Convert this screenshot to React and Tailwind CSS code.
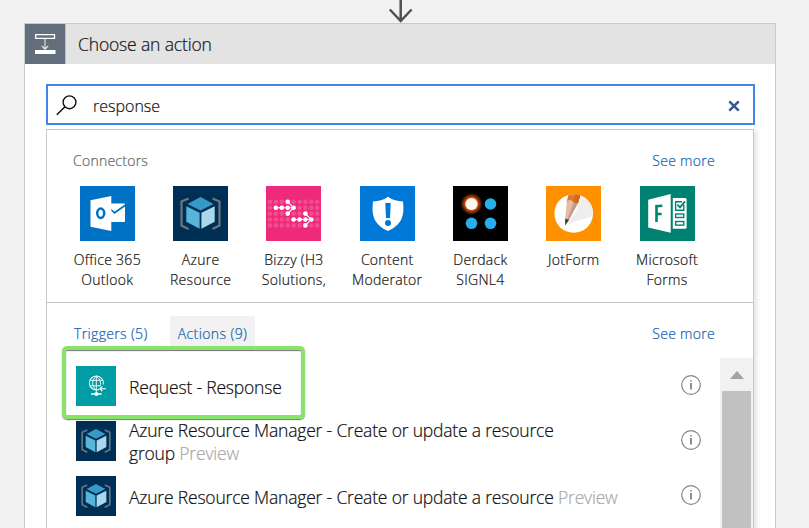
import React from "react";

function AzureIcon({ className }) {
  return (
    <svg viewBox="0 0 55 55" className={className}>
      <rect width="55" height="55" fill="#002f55" />
      <path d="M15.5 12.5 L8.5 15.5 V39.5 L15.5 43" fill="none" stroke="#6d7780" strokeWidth="2.2" />
      <path d="M39.5 12.5 L46.5 15.5 V39.5 L39.5 43" fill="none" stroke="#6d7780" strokeWidth="2.2" />
      <path d="M27.5 11 L40.5 18 L27.5 24.5 L14.5 18 Z" fill="#3999c6" />
      <path d="M13.3 20.3 L26.6 26.8 V42.8 L13.3 35.8 Z" fill="#59b4d9" />
      <path d="M41.7 20.3 L28.4 26.8 V42.8 L41.7 35.8 Z" fill="#a9d8ec" />
    </svg>
  );
}

function OutlookIcon() {
  return (
    <svg viewBox="0 0 55 55" className="size-[55px]">
      <rect width="55" height="55" fill="#0072c6" />
      <rect x="29" y="17.5" width="16" height="18.5" rx="0.8" fill="#fff" />
      <path d="M31 23.5 L34.5 26.8 L46 18.8" fill="none" stroke="#0072c6" strokeWidth="1.7" />
      <path d="M10.5 14.3 L31.3 10 V45 L10.5 40.8 Z" fill="#fff" />
      <ellipse cx="20.7" cy="27.3" rx="3.5" ry="4.7" fill="none" stroke="#0072c6" strokeWidth="2.5" />
    </svg>
  );
}

const gridDots = [];
for (let r = 0; r < 5; r++) {
  for (let c = 0; c < 9; c++) gridDots.push([4 + c * 5.9, 15.8 + r * 5.9]);
}
const brightDots = [
  [9.9, 21.7], [15.8, 21.7], [21.7, 21.7], [27.6, 21.7], [21.7, 15.8], [21.7, 27.6],
  [27.6, 33.5], [33.5, 33.5], [39.4, 33.5], [45.3, 33.5], [39.4, 27.6], [39.4, 39.4],
];

function BizzyIcon() {
  return (
    <svg viewBox="0 0 55 55" className="size-[55px]">
      <rect width="55" height="55" fill="#ee2a7b" />
      {gridDots.map(([x, y]) => (
        <circle key={x + "-" + y} cx={x} cy={y} r="2.3" fill="#fff" opacity="0.17" />
      ))}
      <path
        d="M9.9 21.7 H27.6 M21.7 15.8 L27.6 21.7 L21.7 27.6 M27.6 33.5 H45.3 M39.4 27.6 L45.3 33.5 L39.4 39.4"
        fill="none" stroke="#fff" strokeWidth="1.1"
      />
      {brightDots.map(([x, y]) => (
        <circle key={x + "-" + y} cx={x} cy={y} r="2.3" fill="#fff" />
      ))}
    </svg>
  );
}

function ModeratorIcon() {
  return (
    <svg viewBox="0 0 55 55" className="size-[55px]">
      <rect width="55" height="55" fill="#0078d7" />
      <path d="M28 10.8 C32.5 14.3 37.5 15.3 43 15.5 C44.6 29 42.5 38.5 28 45 C13.5 38.5 11.4 29 13 15.5 C18.5 15.3 23.5 14.3 28 10.8 Z" fill="#fff" />
      <path d="M25.3 17 H30.7 L30 32 H26 Z" fill="#0078d7" />
      <circle cx="28" cy="37" r="3" fill="#0078d7" />
    </svg>
  );
}

function SignlIcon() {
  return (
    <svg viewBox="0 0 55 55" className="size-[55px]">
      <defs>
        <radialGradient id="signlGlow">
          <stop offset="0.5" stopColor="#f06a10" />
          <stop offset="0.68" stopColor="#a03a08" />
          <stop offset="1" stopColor="#000" />
        </radialGradient>
      </defs>
      <rect width="55" height="55" fill="#000" />
      <circle cx="18.5" cy="18" r="11" fill="url(#signlGlow)" />
      <circle cx="18.5" cy="18" r="6.1" fill="#fff7f0" />
      <circle cx="37.5" cy="18" r="5.8" fill="#28aeea" />
      <circle cx="18.5" cy="37.3" r="5.8" fill="#28aeea" />
      <circle cx="37.5" cy="37.3" r="5.8" fill="#28aeea" />
    </svg>
  );
}

function JotFormIcon() {
  return (
    <svg viewBox="0 0 55 55" className="size-[55px]">
      <defs>
        <clipPath id="jotDisc"><circle cx="27.7" cy="27.5" r="19.3" /></clipPath>
      </defs>
      <rect width="55" height="55" fill="#ff9100" />
      <circle cx="27.7" cy="27.5" r="19.3" fill="#fff" />
      <g clipPath="url(#jotDisc)">
        <path d="M36 8 L47 20 V30 L20.5 38.5 L30 26 Z" fill="#eeeeef" />
        <path d="M23 7 L34.8 8 L31.8 18 L20.8 15 Z" fill="#e87722" />
        <path d="M29.5 8 L34.8 8 L31.8 18 L27.5 16.5 Z" fill="#d0681f" />
        <path d="M20.8 15 L24.5 13.8 L27.5 16.5 L31.8 17.5 L22.6 34.5 L19.2 33 Z" fill="#e3bda6" />
        <path d="M27.5 16.5 L31.8 17.5 L22.6 34.5 L21.4 33.7 Z" fill="#c69a83" />
        <path d="M19.3 32.4 L23 34 L19 39.5 Z" fill="#35383d" />
      </g>
    </svg>
  );
}

function FormsIcon() {
  return (
    <svg viewBox="0 0 55 55" className="size-[55px]">
      <rect width="55" height="55" fill="#008272" />
      <path d="M32.8 12 H45 Q46.6 12 46.6 13.6 V41.2 Q46.6 42.8 45 42.8 H32.8 Z" fill="#fff" />
      <path d="M8.2 13.8 L30.7 8 V46.8 L8.2 41.5 Z" fill="#fff" />
      <path d="M16.5 36 V20.2 L22.3 19.8 M16.5 28 H21.6" fill="none" stroke="#008272" strokeWidth="2.6" />
      <g fill="none" stroke="#008272" strokeWidth="1.4">
        <path d="M43.8 18.5 V24.3 H35.6 V15.8 H42" />
        <path d="M37.4 18.7 L40 21.3 L45 15.3" strokeWidth="1.8" />
        <rect x="35.6" y="28" width="8.2" height="3.5" />
        <rect x="35.6" y="35.5" width="8.2" height="3.6" />
      </g>
    </svg>
  );
}

function RequestIcon() {
  return (
    <svg viewBox="0 0 40 40" className="size-10">
      <rect width="40" height="40" fill="#009da5" />
      <g fill="none" stroke="#fff" strokeWidth="1.1">
        <path d="M23.5 23.2 A7 7 0 1 1 27.2 18.5" />
        <path d="M20.3 10.2 C15.5 13.5 15.5 20.5 20.3 24.2 M20.3 10.2 C25 13.5 25 18 24 20.5 M20.3 10.2 V28 M14.5 14.3 H26 M13.5 19.8 H24" strokeWidth="0.9" />
        <path d="M24 22.7 H30 M26.3 20.4 L24 22.7 L26.3 25" />
        <path d="M15 28 H25.6" strokeWidth="1.5" />
      </g>
      <circle cx="20.3" cy="28" r="1.9" fill="#fff" />
    </svg>
  );
}

function InfoIcon() {
  return (
    <svg viewBox="0 0 20 20" className="size-5">
      <circle cx="10" cy="10" r="9.3" fill="none" stroke="#868686" strokeWidth="1.2" />
      <path d="M10 8 V14.6" stroke="#808080" strokeWidth="1.8" />
      <path d="M10 5.2 V6.6" stroke="#808080" strokeWidth="1.8" />
    </svg>
  );
}

const connectors = [
  { icon: <OutlookIcon />, lines: ["Office 365", "Outlook"] },
  { icon: <AzureIcon className="size-[55px]" />, lines: ["Azure", "Resource"] },
  { icon: <BizzyIcon />, lines: ["Bizzy (H3", "Solutions,"] },
  { icon: <ModeratorIcon />, lines: ["Content", "Moderator"] },
  { icon: <SignlIcon />, lines: ["Derdack", "SIGNL4"] },
  { icon: <JotFormIcon />, lines: ["JotForm"] },
  { icon: <FormsIcon />, lines: ["Microsoft", "Forms"] },
];

function ActionRow({ icon, children }) {
  return (
    <div className="flex h-[55px] shrink-0 items-start pl-[29px]">
      <div className="mt-2 shrink-0">{icon}</div>
      <div className="mt-[6px] ml-[13px] flex h-[46px] flex-1 items-center text-[17.5px] leading-[23px] tracking-[-0.19px] whitespace-nowrap text-[#111]">
        <div>{children}</div>
      </div>
      <div className="mt-[17px] mr-[19px] shrink-0"><InfoIcon /></div>
    </div>
  );
}

export default function App() {
  return (
    <div className="relative h-[528px] w-[809px] overflow-hidden bg-[#f1f1f1] pt-[23px] pl-[24px] font-['Open_Sans','Noto_Sans',sans-serif] font-light [-webkit-text-stroke:0.22px]">
      <svg viewBox="0 0 28 24" className="absolute top-0 left-[387px] h-6 w-7">
        <path d="M13.7 0 V21 M2.8 9.5 L13.7 21 L24.6 9.5" fill="none" stroke="#505050" strokeWidth="2.5" />
      </svg>

      <div className="flex h-[520px] w-[752px] flex-col border border-[#cacaca] bg-white">
        <header className="flex h-10 shrink-0 items-center bg-[#e3e3e3]">
          <div className="h-10 w-[41px] border-r border-[#bfc3c7] bg-[#626e7c]">
            <svg viewBox="0 0 40 40" className="size-10">
              <path d="M10.7 10.7 H29.5 V14.4 H10.7 Z" fill="none" stroke="#fff" strokeWidth="1.3" />
              <path d="M20 15 V25 M16.8 22 L20 25.2 L23.2 22" fill="none" stroke="#e6e9ec" strokeWidth="1.1" />
              <rect x="10" y="26" width="20.5" height="4" fill="#fff" />
            </svg>
          </div>
          <h1 className="ml-3 pt-px text-[17.5px] tracking-[-0.15px] whitespace-nowrap text-[#161616]">Choose an action</h1>
        </header>

        <div className="mt-5 ml-[21px] flex h-[41px] w-[709px] shrink-0 items-center border-2 border-[#4285e8] bg-white">
          <svg viewBox="0 0 22 22" className="ml-2 size-[22px]">
            <circle cx="13.5" cy="8.3" r="6.4" fill="none" stroke="#111" strokeWidth="1.4" />
            <path d="M9 12.8 L0.8 20.8" stroke="#111" strokeWidth="1.5" />
          </svg>
          <span className="ml-[15px] pt-[2px] text-[16px] tracking-[0px] text-[#161616]">response</span>
          <svg viewBox="0 0 12 12" className="mt-[2px] mr-[13px] ml-auto size-3">
            <path d="M1.3 1.3 L10.7 10.7 M10.7 1.3 L1.3 10.7" stroke="#35589b" strokeWidth="2.6" />
          </svg>
        </div>

        <div className="mt-1 ml-[21px] flex h-[420px] w-[708px] shrink-0 flex-col border border-[#c8c8c8] bg-white shadow-[3px_2px_4px_rgba(0,0,0,0.1)]">
          <section className="h-[173px] shrink-0 border-b border-[#c4c4c4]">
            <div className="flex h-[56px] items-center justify-between pt-[5px] pr-[38px] pl-[26px] text-[14px]">
              <span className="tracking-[0.25px] text-[#666]">Connectors</span>
              <a className="tracking-[0.3px] text-[#1463b5]">See more</a>
            </div>
            <div className="ml-[13.7px] grid w-[653px] grid-cols-7">
              {connectors.map((c) => (
                <div key={c.lines[0]} className="flex flex-col items-center">
                  {c.icon}
                  <div className="mt-[9px] text-center text-[14px] leading-5 tracking-[0.3px] whitespace-nowrap text-[#161616]">
                    {c.lines.map((line) => <div key={line}>{line}</div>)}
                  </div>
                </div>
              ))}
            </div>
          </section>

          <nav className="flex h-[55px] shrink-0 items-start pt-[13px] text-[14px] leading-[35px] whitespace-nowrap text-[#1463b5]">
            <a className="ml-[27px] w-[96px] tracking-[0.35px]">Triggers (5)</a>
            <a className="h-[35px] w-[85px] bg-[#f2f2f2] text-center tracking-[0.4px]">Actions (9)</a>
            <a className="mr-[38px] ml-auto tracking-[0.3px]">See more</a>
          </nav>

          <div className="flex flex-1">
            <div className="flex flex-1 flex-col">
              <ActionRow icon={<RequestIcon />}>Request - Response</ActionRow>
              <ActionRow icon={<AzureIcon className="size-10" />}>
                Azure Resource Manager - Create or update a resource
                <br />
                group <span className="text-[#aaa]">Preview</span>
              </ActionRow>
              <ActionRow icon={<AzureIcon className="size-10" />}>
                Azure Resource Manager - Create or update a resource <span className="text-[#aaa]">Preview</span>
              </ActionRow>
            </div>
            <div className="flex w-[33px] flex-col items-center bg-[#f1f1f1]">
              <div className="flex h-[33px] items-center">
                <svg viewBox="0 0 14 8" className="h-2 w-3.5"><path d="M7 0 L14 8 H0 Z" fill="#a3a3a3" /></svg>
              </div>
              <div className="w-[29px] flex-1 bg-[#c1c1c1]" />
            </div>
          </div>
        </div>
      </div>

      <div className="absolute top-[346px] left-[62px] h-[73px] w-[243px] rounded-[5px] border-4 border-[#86e469] shadow-[0_1px_1px_rgba(60,60,60,0.7),inset_0_1px_1px_rgba(60,60,60,0.7)]" />
    </div>
  );
}
